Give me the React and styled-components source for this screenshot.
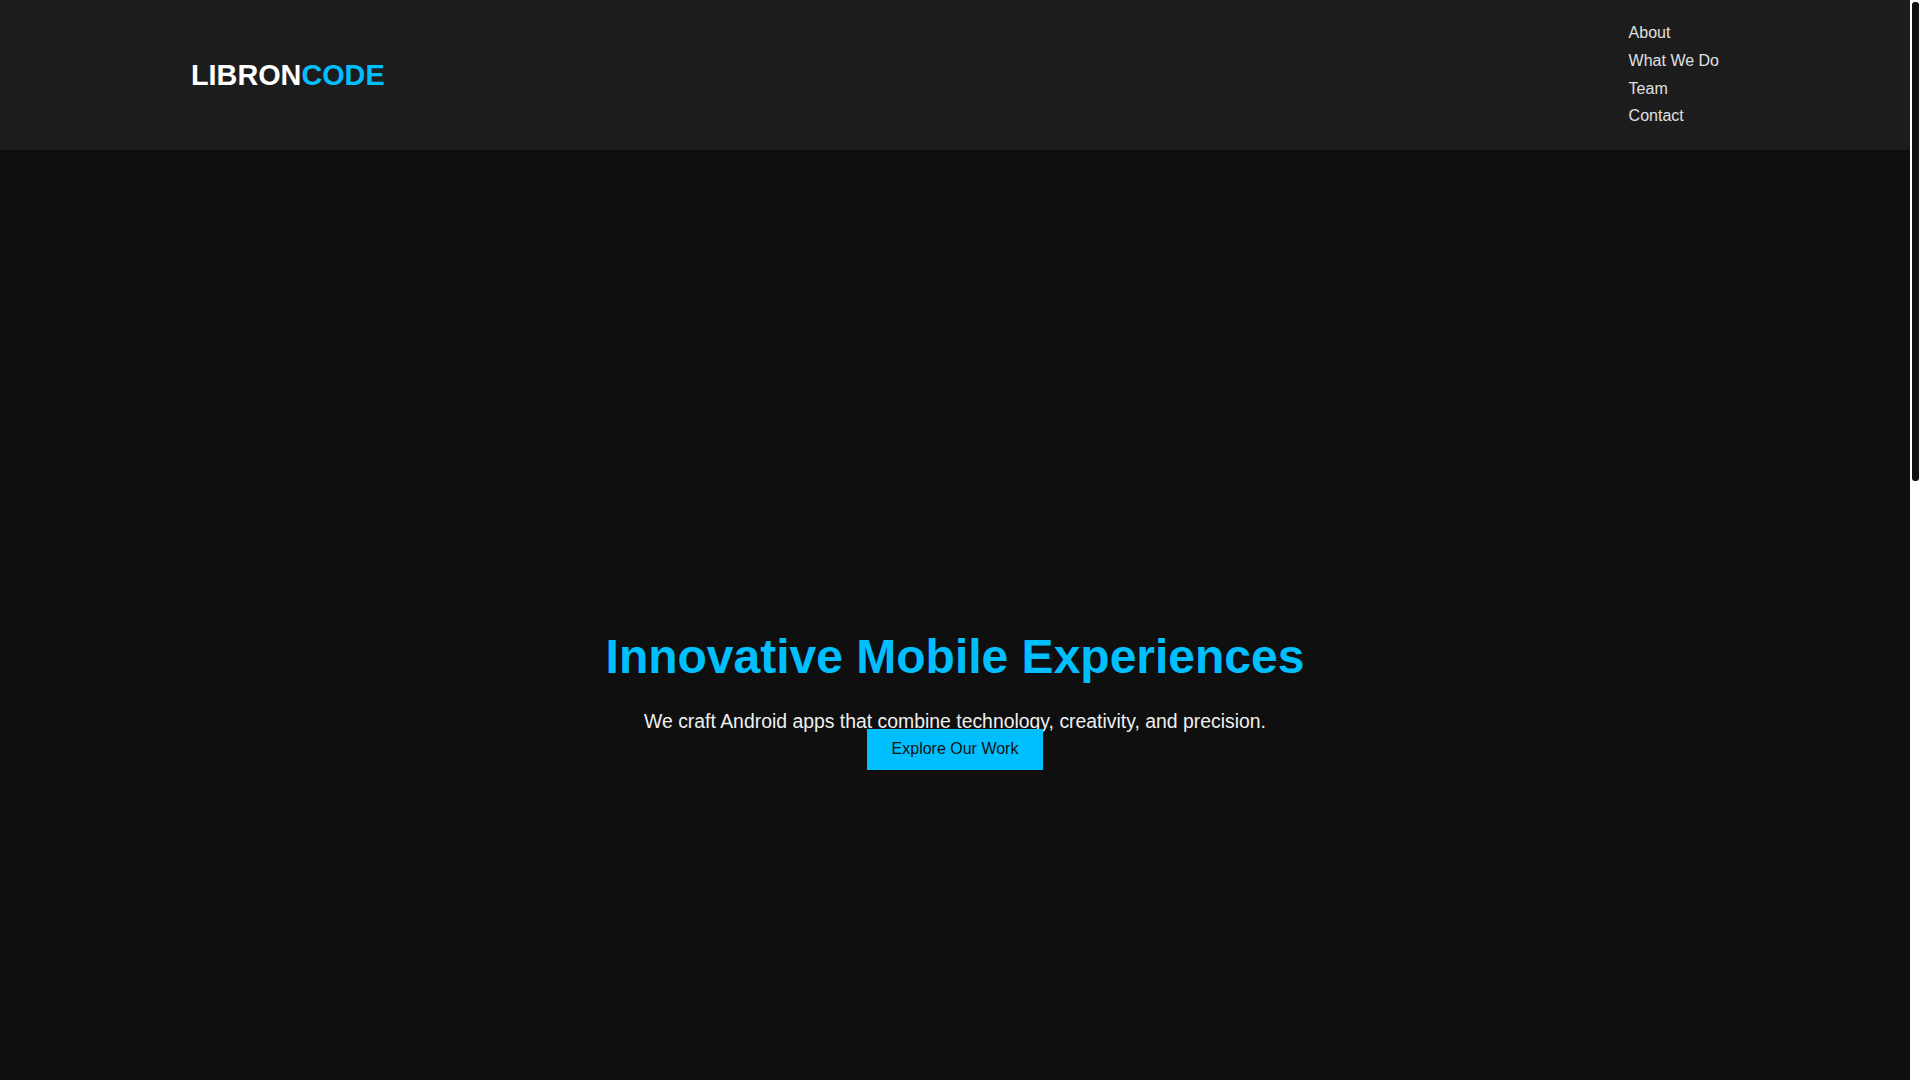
import React from "react";
import styled, { createGlobalStyle } from "styled-components";

const GlobalStyle = createGlobalStyle`
  * { box-sizing: border-box; }
  html, body { margin: 0; padding: 0; }
  body {
    background: #ffffff;
    color: #eeeeee;
    font-family: "Liberation Sans", Arial, sans-serif;
  }
`;

const Page = styled.div`
  margin-right: 10px;
  background: #0f0f0f;
`;

const ScrollTrack = styled.div`
  position: fixed;
  top: 0;
  right: 0;
  width: 10px;
  height: 100vh;
  background: #ffffff;
  padding: 2px 1px 0 2px;
`;

const ScrollThumb = styled.div`
  width: 7px;
  height: 479px;
  background: #111111;
  border-radius: 3px;
`;

const Header = styled.header`
  height: 150px;
  background: #1c1c1c;
  display: flex;
  align-items: center;
  justify-content: space-between;
  padding: 0 10%;
`;

const Logo = styled.div`
  font-size: 28.8px;
  font-weight: 700;
  color: #ffffff;
`;

const Accent = styled.span`
  color: #00bfff;
`;

const NavList = styled.ul`
  list-style: none;
  margin: 0;
  padding: 0;
  display: flex;
  flex-direction: column;
  gap: 9.2px;
`;

const NavLink = styled.a`
  color: #e0e0e0;
  text-decoration: none;
  font-size: 16px;
  line-height: 18.4px;
  display: block;
`;

const Hero = styled.section`
  height: 1080px;
  display: flex;
  flex-direction: column;
  align-items: center;
  padding-top: 479px;
  text-align: center;
`;

const Title = styled.h1`
  margin: 0;
  font-size: 48px;
  font-weight: 700;
  color: #00bfff;
  line-height: 55px;
`;

const Subtitle = styled.p`
  margin: 26px 0 0;
  font-size: 19.4px;
  line-height: 22px;
  color: #f0f0f0;
`;

const CTA = styled.a`
  margin-top: -3px;
  display: inline-block;
  background: #00bfff;
  color: #111111;
  font-size: 16px;
  line-height: 18.4px;
  padding: 11.3px 24.5px;
  text-decoration: none;
`;

const Section = styled.section`
  height: 297.5px;
  padding: 60px 10%;
  background: ${(p) => (p.$alt ? "#141414" : "#0f0f0f")};
`;

const SectionTitle = styled.h2`
  margin: 0 0 20px;
  font-size: 32px;
  color: #00bfff;
`;

const SectionText = styled.p`
  margin: 0;
  font-size: 18px;
  line-height: 1.6;
  color: #cccccc;
  max-width: 800px;
`;

const navItems = ["About", "What We Do", "Team", "Contact"];

const sections = [
  { id: "about", title: "About", text: "LibronCode is a studio focused on building fast, reliable and beautiful Android applications." },
  { id: "what", title: "What We Do", text: "From concept to release, we design, develop and maintain mobile products that people enjoy using." },
  { id: "team", title: "Team", text: "A small group of engineers and designers who care about the details." },
  { id: "contact", title: "Contact", text: "Have a project in mind? Get in touch and let's build something great together." },
];

export default function App() {
  return (
    <>
      <GlobalStyle />
      <Page>
        <Header>
          <Logo>
            LIBRON<Accent>CODE</Accent>
          </Logo>
          <nav>
            <NavList>
              {navItems.map((n) => (
                <li key={n}>
                  <NavLink href={"#" + n}>{n}</NavLink>
                </li>
              ))}
            </NavList>
          </nav>
        </Header>
        <Hero>
          <Title>Innovative Mobile Experiences</Title>
          <Subtitle>We craft Android apps that combine technology, creativity, and precision.</Subtitle>
          <CTA href="#work">Explore Our Work</CTA>
        </Hero>
        {sections.map((s, i) => (
          <Section key={s.id} id={s.id} $alt={i % 2 === 0}>
            <SectionTitle>{s.title}</SectionTitle>
            <SectionText>{s.text}</SectionText>
          </Section>
        ))}
      </Page>
      <ScrollTrack aria-hidden="true">
        <ScrollThumb />
      </ScrollTrack>
    </>
  );
}
